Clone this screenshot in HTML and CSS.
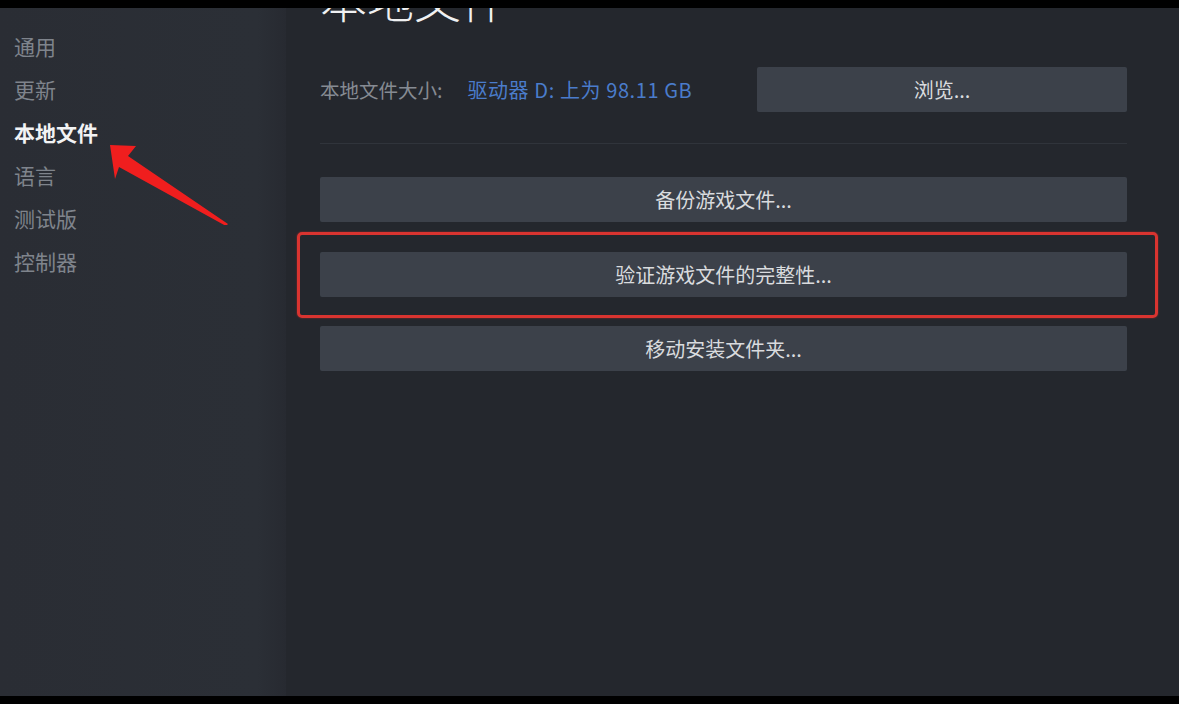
FILE: index.html
```html
<!DOCTYPE html>
<html lang="zh-CN">
<head>
<meta charset="utf-8">
<title>本地文件</title>
<link rel="stylesheet" href="styles.css">
</head>
<body>
<div class="bar"></div>
<div class="app">
  <nav class="sidebar">
    <div class="nav-item">通用</div>
    <div class="nav-item">更新</div>
    <div class="nav-item active">本地文件</div>
    <div class="nav-item">语言</div>
    <div class="nav-item">测试版</div>
    <div class="nav-item">控制器</div>
  </nav>
  <main class="main">
    <h1 class="title">本地文件</h1>
    <div class="size-row">
      <div class="size-info">
        <span class="size-label">本地文件大小:</span>
        <span class="size-link">驱动器 D: 上为 98.11 GB</span>
      </div>
      <button class="btn btn-browse">浏览...</button>
    </div>
    <div class="divider"></div>
    <div class="actions">
      <button class="btn">备份游戏文件...</button>
      <button class="btn">验证游戏文件的完整性...</button>
      <button class="btn">移动安装文件夹...</button>
    </div>
  </main>
  <div class="highlight"></div>
  <svg class="arrow" width="140" height="100" viewBox="0 0 140 100">
    <polygon points="10,20 36,21 28,31 128,99 126,101 19,42 15,54" fill="#f01e1e"/>
  </svg>
</div>
<div class="bar"></div>
</body>
</html>
```

FILE: styles.css
```css
html, body {
  margin: 0;
  padding: 0;
  background: #000;
}
body {
  width: 1179px;
  height: 704px;
  overflow: hidden;
  font-family: "Noto Sans CJK SC", "Noto Sans", sans-serif;
}
.bar {
  height: 8px;
  background: #000;
}
.app {
  position: relative;
  height: 688px;
  display: flex;
  overflow: hidden;
  background: #24272d;
}
.sidebar {
  width: 286px;
  flex: none;
  background: linear-gradient(90deg, #2a2d34 0%, #2b2f36 90%, #272a31 100%);
  padding-top: 17px;
  box-sizing: border-box;
}
.nav-item {
  height: 43px;
  line-height: 43px;
  padding-left: 14px;
  font-size: 21px;
  color: #7f848c;
}
.nav-item.active {
  color: #f2f3f4;
  font-weight: 700;
}
.main {
  flex: 1;
  padding: 0 52px 0 34px;
  display: flex;
  flex-direction: column;
}
.title {
  margin: -34px 0 0 0;
  font-size: 47px;
  line-height: 47px;
  height: 47px;
  font-weight: 300;
  color: #f0f1f2;
  letter-spacing: 0;
}
.size-row {
  margin-top: 46px;
  height: 45px;
  display: flex;
  align-items: center;
  justify-content: space-between;
}
.size-info {
  display: flex;
  align-items: center;
  gap: 25px;
  font-size: 19.5px;
}
.size-label {
  color: #868b93;
}
.size-link {
  color: #4a7ccb;
  font-size: 20px;
  letter-spacing: 0.6px;
}
.btn {
  display: block;
  height: 45px;
  border: 0;
  border-radius: 2px;
  padding: 0;
  background: #3c414a;
  color: #d9dbde;
  font-family: "Noto Sans CJK SC", "Noto Sans", sans-serif;
  font-size: 20px;
  text-align: center;
}
.btn-browse {
  width: 370px;
}
.divider {
  margin-top: 31px;
  height: 1px;
  background: #30343b;
}
.actions {
  margin-top: 33px;
  display: flex;
  flex-direction: column;
  gap: 29.5px;
}
.actions .btn {
  width: 100%;
}
.highlight {
  position: absolute;
  left: 297px;
  top: 224px;
  width: 861px;
  height: 86px;
  box-sizing: border-box;
  border: 3.5px solid #d93430;
  border-radius: 5px;
  box-shadow: 0 0 2px rgba(230, 50, 45, 0.6);
}
.arrow {
  position: absolute;
  left: 100px;
  top: 117px;
}
```
